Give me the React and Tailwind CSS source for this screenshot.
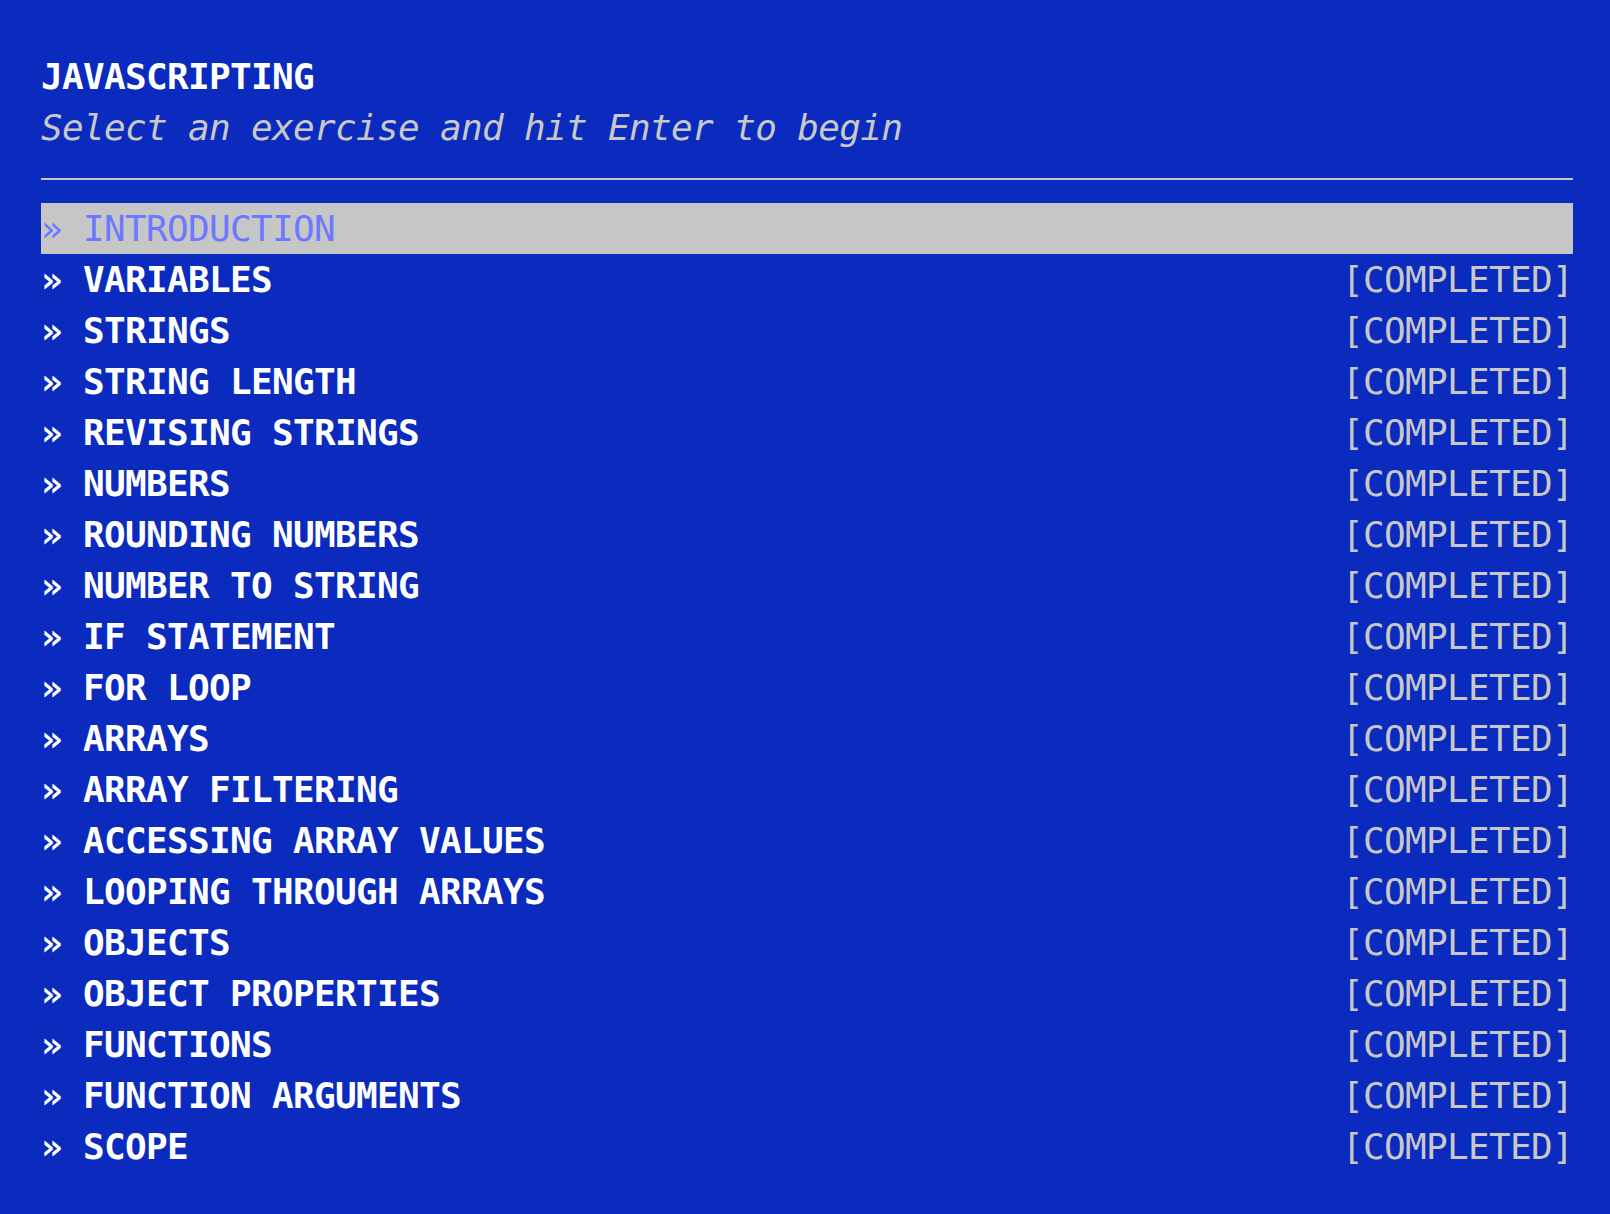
import React from "react";

const items = [
  "INTRODUCTION",
  "VARIABLES",
  "STRINGS",
  "STRING LENGTH",
  "REVISING STRINGS",
  "NUMBERS",
  "ROUNDING NUMBERS",
  "NUMBER TO STRING",
  "IF STATEMENT",
  "FOR LOOP",
  "ARRAYS",
  "ARRAY FILTERING",
  "ACCESSING ARRAY VALUES",
  "LOOPING THROUGH ARRAYS",
  "OBJECTS",
  "OBJECT PROPERTIES",
  "FUNCTIONS",
  "FUNCTION ARGUMENTS",
  "SCOPE",
];

export default function App() {
  return (
    <div
      className="w-[1610px] h-[1214px] bg-[#0a2bbd] pt-[51px] pl-[41px] pr-[37px] text-[36px] leading-[51px] tracking-[-0.67px] whitespace-pre overflow-hidden"
      style={{ fontFamily: '"DejaVu Sans Mono", "Liberation Mono", monospace' }}
    >
      <div className="font-bold text-white">JAVASCRIPTING</div>
      <div className="italic text-[#c8c8c8]">Select an exercise and hit Enter to begin</div>
      <div className="mt-[25px] h-[2px] bg-[#c8c8c8]" />
      <div className="mt-[23px] flex flex-col">
        {items.map((name, i) =>
          i === 0 ? (
            <div key={name} className="h-[51px] flex items-center bg-[#c6c6c6] text-[#6b78ff]">
              <span>{"» " + name}</span>
            </div>
          ) : (
            <div key={name} className="h-[51px] flex items-center justify-between">
              <span className="font-bold text-white">{"» " + name}</span>
              <span className="text-[#c8c8c8]">[COMPLETED]</span>
            </div>
          )
        )}
      </div>
    </div>
  );
}
